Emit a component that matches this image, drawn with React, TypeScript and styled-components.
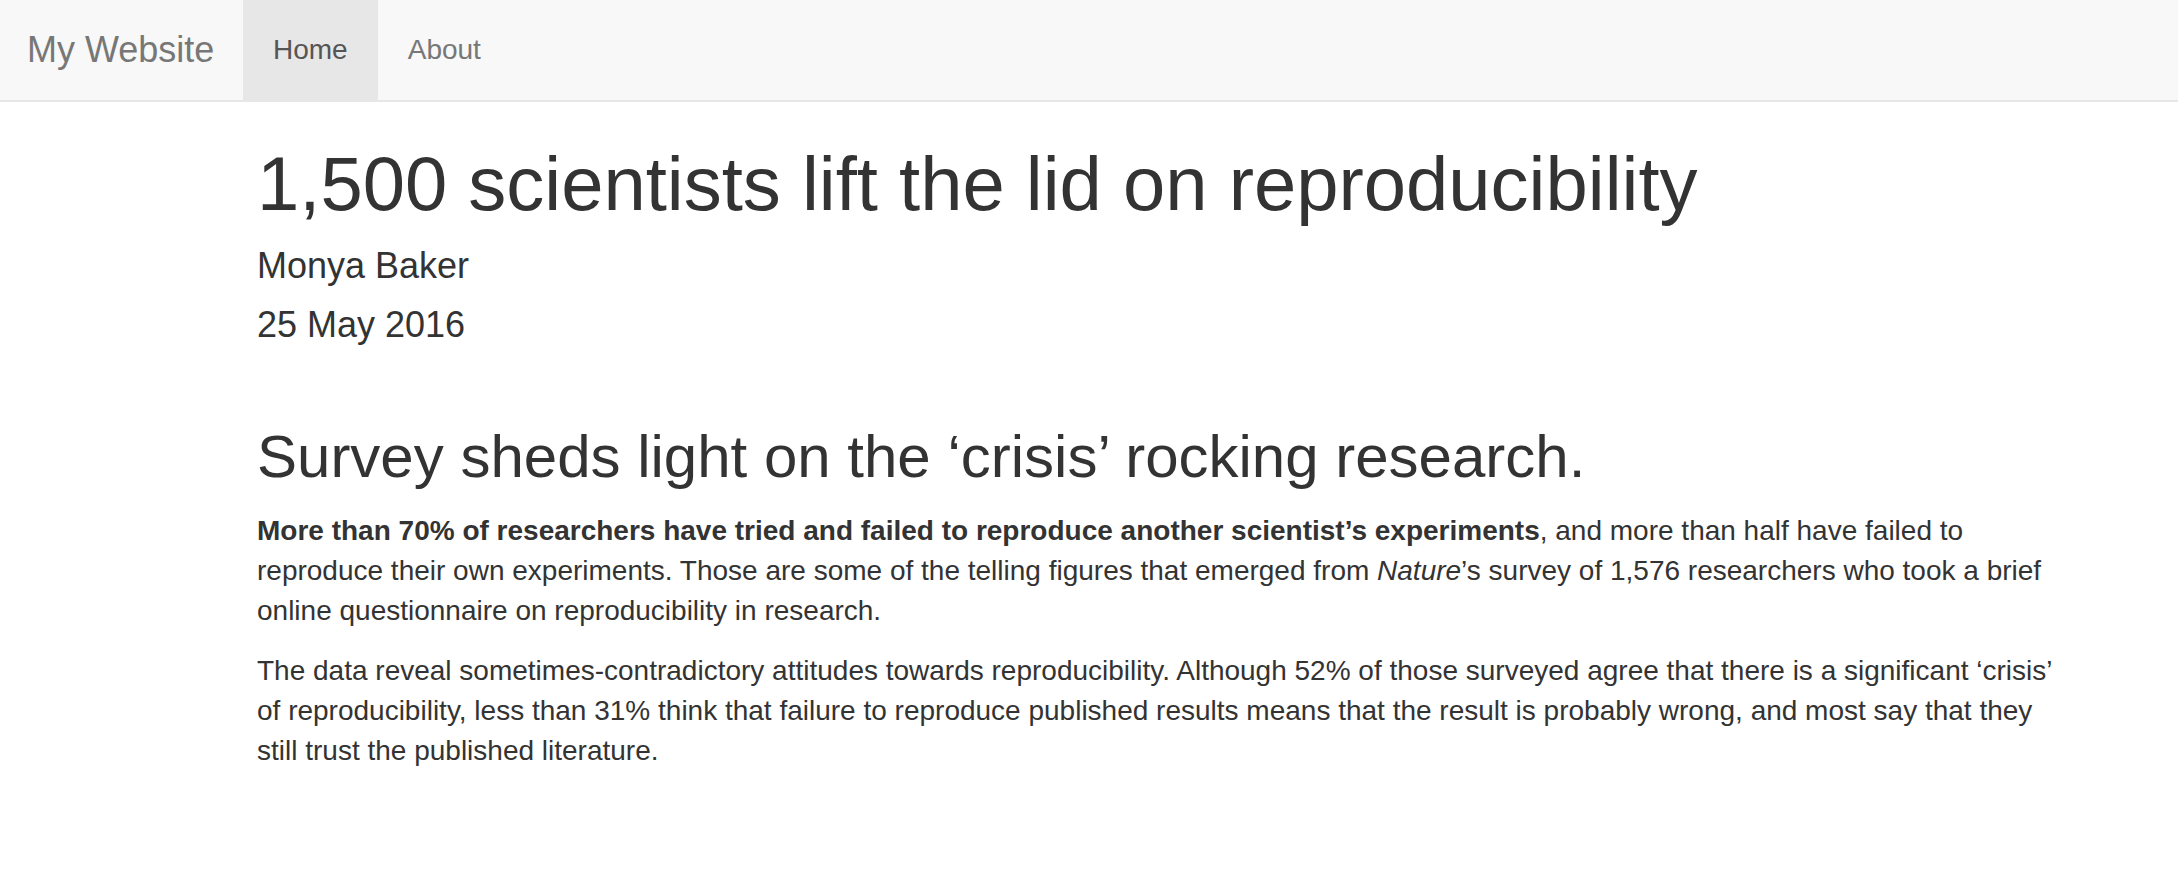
import React from "react";
import styled, { createGlobalStyle } from "styled-components";

const GlobalStyle = createGlobalStyle`
  html, body {
    margin: 0;
    padding: 0;
    background: #ffffff;
  }
  body {
    font-family: "Liberation Sans", Arial, Helvetica, sans-serif;
    font-size: 28px;
    line-height: 40px;
    color: #333333;
  }
  * { box-sizing: border-box; }
`;

const Navbar = styled.nav`
  display: flex;
  align-items: stretch;
  height: 102px;
  background: #f8f8f8;
  border-bottom: 2px solid #e7e7e7;
`;

const Brand = styled.a`
  display: block;
  width: 243px;
  padding: 30px 0 30px 27px;
  font-size: 36px;
  line-height: 40px;
  color: #777777;
  text-decoration: none;
  white-space: nowrap;
  cursor: pointer;
`;

const NavList = styled.ul`
  display: flex;
  margin: 0;
  padding: 0;
  list-style: none;
`;

const NavItem = styled.li`
  display: block;
`;

const NavLink = styled.a<{ $active?: boolean }>`
  display: block;
  padding: 30px 30px;
  font-size: 28px;
  line-height: 40px;
  height: 100px;
  color: ${(p) => (p.$active ? "#555555" : "#777777")};
  background: ${(p) => (p.$active ? "#e7e7e7" : "transparent")};
  text-decoration: none;
  cursor: pointer;
`;

const Main = styled.main`
  width: 1820px;
  margin-left: 257px;
  display: flow-root;
`;

const Header = styled.header``;

const Title = styled.h1`
  margin: 40px 0 20px;
  font-size: 76px;
  line-height: 1.1;
  font-weight: 500;
  color: #333333;
`;

const Meta = styled.h4`
  margin: 20px 0;
  font-size: 36px;
  line-height: 1.1;
  font-weight: 500;
  color: #333333;
`;

const SectionHeading = styled.h2`
  margin: 79px 0 21px;
  font-size: 60px;
  line-height: 1.1;
  font-weight: 500;
  color: #333333;
`;

const Paragraph = styled.p`
  margin: 0 0 20px;
`;

export default function App() {
  return (
    <>
      <GlobalStyle />
      <Navbar>
        <Brand>My Website</Brand>
        <NavList>
          <NavItem>
            <NavLink $active>Home</NavLink>
          </NavItem>
          <NavItem>
            <NavLink>About</NavLink>
          </NavItem>
        </NavList>
      </Navbar>
      <Main>
        <Header>
          <Title>1,500 scientists lift the lid on reproducibility</Title>
          <Meta>Monya Baker</Meta>
          <Meta>25 May 2016</Meta>
        </Header>
        <section>
          <SectionHeading>Survey sheds light on the ‘crisis’ rocking research.</SectionHeading>
          <Paragraph>
            <strong>More than 70% of researchers have tried and failed to reproduce another scientist’s experiments</strong>, and more than half have failed to reproduce their own experiments. Those are some of the telling figures that emerged from <em>Nature</em>’s survey of 1,576 researchers who took a brief online questionnaire on reproducibility in research.
          </Paragraph>
          <Paragraph>
            The data reveal sometimes-contradictory attitudes towards reproducibility. Although 52% of those surveyed agree that there is a significant ‘crisis’ of reproducibility, less than 31% think that failure to reproduce published results means that the result is probably wrong, and most say that they still trust the published literature.
          </Paragraph>
        </section>
      </Main>
    </>
  );
}
